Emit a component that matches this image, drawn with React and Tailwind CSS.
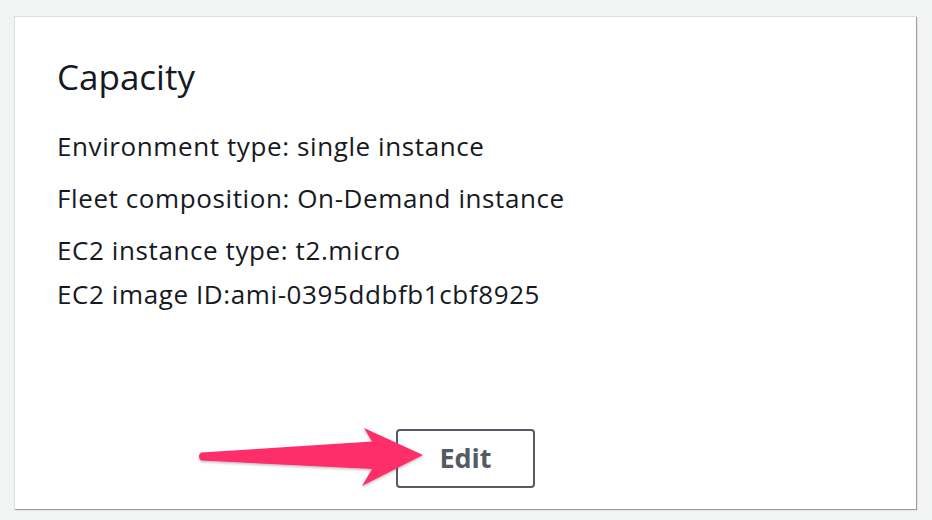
function Arrow() {
  return (
    <svg
      className="absolute left-0 top-0 pointer-events-none"
      width="932"
      height="520"
      viewBox="0 0 932 520"
    >
      <defs>
        <filter id="arrowShadow" x="-10%" y="-30%" width="120%" height="160%">
          <feDropShadow dx="0" dy="1.5" stdDeviation="1.2" floodColor="#000" floodOpacity="0.25" />
        </filter>
      </defs>
      <path
        d="M201 452.5 L372 441.5 L364 428 L423 455 L362 486 L372 469 L201 460.5 Q197 456.5 201 452.5 Z"
        fill="#fd2d6b"
        filter="url(#arrowShadow)"
      />
    </svg>
  );
}

export default function App() {
  return (
    <div
      className="relative w-[932px] h-[520px] bg-[#f2f3f3] pt-[16px] pl-[14px]"
      style={{ fontFamily: '"Open Sans", "Noto Sans", sans-serif' }}
    >
      <div className="w-[902px] h-[493px] bg-white border-t border-l border-[#dcdede] shadow-[1px_1px_1px_0_rgba(0,0,0,0.35)] flex flex-col">
        <div className="pl-[42px] pt-[40px] text-[#16191f]">
          <h2 className="text-[35px] leading-[40px] font-normal">Capacity</h2>
          <div className="mt-[27px] flex flex-col gap-[8px] text-[26px] leading-[44px] tracking-[0.6px]">
            <p>Environment type: single instance</p>
            <p>Fleet composition: On-Demand instance</p>
            <p>
              EC2 instance type: t2.micro
              <br />
              EC2 image ID:ami-0395ddbfb1cbf8925
            </p>
          </div>
        </div>
        <div className="mt-auto flex justify-center pb-[21px]">
          <button className="w-[139px] h-[59px] border-2 border-[#545b64] rounded-[4px] bg-white text-[27px] font-bold text-[#545b64]">
            Edit
          </button>
        </div>
      </div>
      <Arrow />
    </div>
  );
}
